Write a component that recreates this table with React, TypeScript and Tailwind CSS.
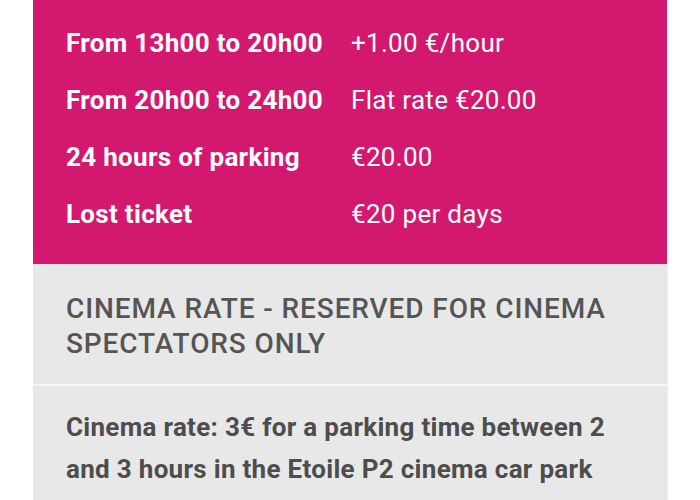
import React from 'react';

const rates = [
  { label: 'From 08h00 to 13h00', value: '+1.50 €/hour' },
  { label: 'From 13h00 to 20h00', value: '+1.00 €/hour' },
  { label: 'From 20h00 to 24h00', value: 'Flat rate €20.00' },
  { label: '24 hours of parking', value: '€20.00' },
  { label: 'Lost ticket', value: '€20 per days' },
];

const App = () => {
  return (
    <div className="w-[700px] h-[500px] overflow-hidden bg-white font-['Roboto',sans-serif]">
      <div className="mx-auto w-[634px] mt-[-42px] shadow-[1px_0_2px_rgba(0,0,0,0.08)]">
        <div className="bg-[#d2196f] pl-[33px] pb-[21px] text-white text-[26px] tracking-[0.3px]">
          {rates.map((r) => (
            <div key={r.label} className="grid grid-cols-[285px_1fr] h-[57px] items-center">
              <span className="font-bold">{r.label}</span>
              <span>{r.value}</span>
            </div>
          ))}
        </div>
        <div className="bg-[#e8e8e8] pl-[33px] pr-[33px] pt-[27px] pb-[23px] border-b-2 border-[#f6f6f6]">
          <h3 className="text-[28px] leading-[35px] font-medium tracking-[0.9px] text-[#555555]">
            CINEMA RATE - RESERVED FOR CINEMA SPECTATORS ONLY
          </h3>
        </div>
        <div className="bg-[#e8e8e8] pl-[33px] pr-[33px] pt-[20px] h-[200px]">
          <p className="text-[26px] leading-[42px] font-bold tracking-[0.3px] text-[#4d4d4d]">
            Cinema rate: 3€ for a parking time between 2 and 3 hours in the Etoile P2 cinema car park
            only on presentation of your cinema ticket.
          </p>
        </div>
      </div>
    </div>
  );
};

export default App;
